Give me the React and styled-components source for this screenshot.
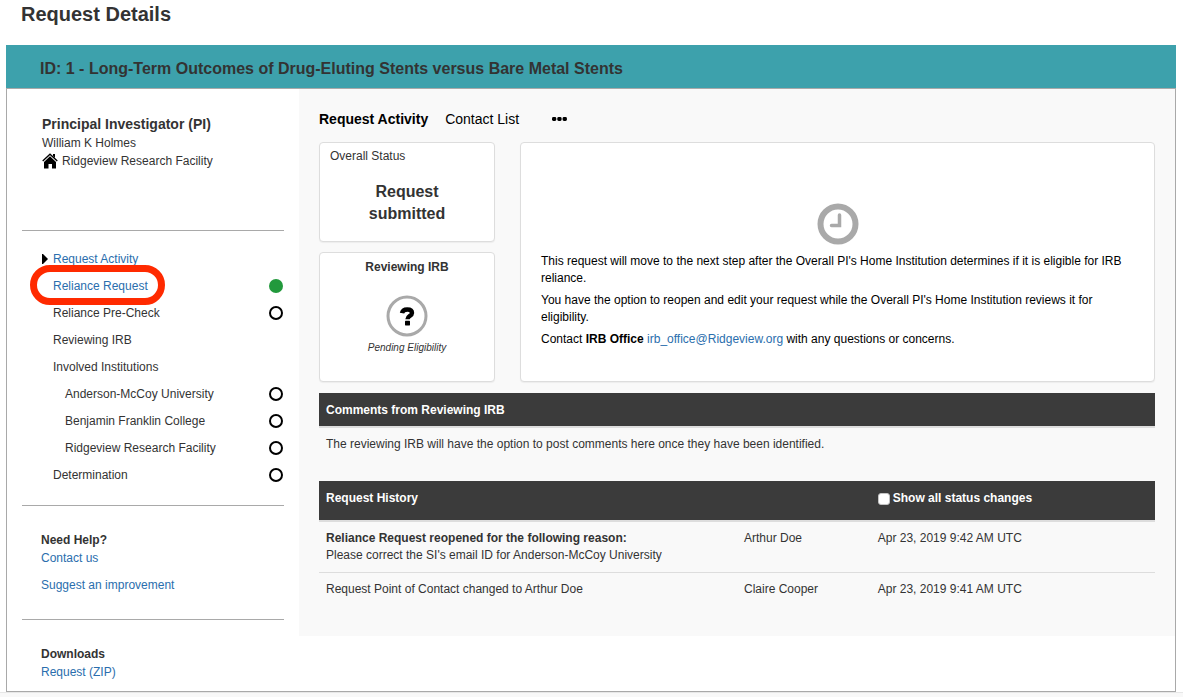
import React from "react";
import styled, { createGlobalStyle } from "styled-components";

const GlobalStyle = createGlobalStyle`
  *, *::before, *::after { box-sizing: border-box; }
  body {
    margin: 0;
    background: #fff;
    color: #333;
    font-family: "Liberation Sans", Arial, Helvetica, sans-serif;
    font-size: 12px;
    line-height: 18px;
  }
  h1, h2, h3, p, ul, table { margin: 0; padding: 0; }
  ul { list-style: none; }
`;

const Page = styled.div`
  padding: 0 7px 0 6px;
`;

const PageTitle = styled.h1`
  padding: 0 15px 17px;
  font-size: 20px;
  line-height: 28px;
`;

const Panel = styled.section`
  display: flex;
  flex-direction: column;
`;

const PanelHeader = styled.h2`
  padding: 12px 34px 8px;
  background: #3da1ac;
  font-size: 16px;
  line-height: 23px;
`;

const PanelBody = styled.div`
  display: flex;
  align-items: flex-start;
  border: 1px solid #a9a9a9;
`;

const Sidebar = styled.aside`
  flex: 0 0 25%;
  padding: 0 15px;
`;

const SideSection = styled.section`
  padding: ${(p) => p.$pad};
  border-top: ${(p) => (p.$first ? "0" : "1px solid #a9a9a9")};
`;

const SideHeading = styled.h3`
  font-size: ${(p) => (p.$large ? "14px" : "12px")};
  line-height: ${(p) => (p.$large ? "19px" : "18px")};
`;

const Link = styled.a`
  color: #2a6ead;
  text-decoration: none;
`;

const SideLink = styled(Link)`
  display: block;
  margin-bottom: ${(p) => (p.$spaced ? "9px" : "0")};
`;

const Facility = styled.p`
  display: flex;
  align-items: center;
  gap: 4px;
`;

const NavItem = styled.li`
  display: flex;
  align-items: center;
  justify-content: space-between;
  height: 27px;
  padding-left: ${(p) => (p.$nested ? "43px" : p.$current ? "20px" : "31px")};
  padding-right: 1px;
`;

const NavLabel = styled.span`
  position: relative;
  display: flex;
  align-items: center;
`;

const Marker = styled.svg`
  width: 6px;
  height: 10px;
  margin-right: 5px;
`;

const Highlight = styled.span`
  position: absolute;
  inset: -12px -17px -10px -23px;
  border: 7px solid #ff2a00;
  border-radius: 20px;
  pointer-events: none;
`;

const StatusDot = styled.span`
  width: 14px;
  height: 14px;
  border-radius: 50%;
  border: ${(p) => (p.$done ? "0" : "2px solid #000")};
  background: ${(p) => (p.$done ? "#22993c" : "transparent")};
`;

const Main = styled.main`
  flex: 1;
  min-width: 0;
  padding: 20px 20px 30px;
  background: #f9f9f9;
`;

const Tabs = styled.nav`
  display: flex;
  align-items: center;
  height: 20px;
  margin-bottom: 13px;
`;

const Tab = styled.button`
  margin: 0 17px 0 0;
  padding: 0;
  border: 0;
  background: none;
  color: #000;
  font-family: inherit;
  font-size: 14px;
  font-weight: ${(p) => (p.$active ? "bold" : "normal")};
  line-height: 20px;
`;

const MoreButton = styled(Tab)`
  display: flex;
  margin: 0 0 0 16px;
`;

const Summary = styled.div`
  display: flex;
  gap: 25px;
  margin-bottom: 11px;
`;

const StatusColumn = styled.div`
  display: flex;
  flex-direction: column;
  flex: 0 0 176px;
  gap: 10px;
`;

const Card = styled.section`
  border: 1px solid #ddd;
  border-radius: 4px;
  background: #fff;
  box-shadow: 0 1px 1px rgba(0, 0, 0, 0.05);
`;

const StatusCard = styled(Card)`
  padding: 4px 10px 16px;
`;

const StatusValue = styled.p`
  padding: 16px 30px 0;
  font-size: 16px;
  font-weight: bold;
  line-height: 22px;
  text-align: center;
`;

const ReviewCard = styled(Card)`
  display: flex;
  flex-direction: column;
  align-items: center;
  padding: 5px 10px 24px;
`;

const ReviewIcon = styled.svg`
  margin: 19px 0 2px;
`;

const ReviewNote = styled.p`
  font-size: 10px;
  font-style: italic;
`;

const MessageCard = styled(Card)`
  display: flex;
  flex: 1;
  flex-direction: column;
  min-width: 0;
  padding: 60px 20px 0;
  color: #000;
  line-height: 17px;
`;

const ClockIcon = styled.svg`
  align-self: center;
  margin-bottom: 8px;
`;

const Message = styled.p`
  margin-bottom: 5px;
`;

const DataTable = styled.table`
  width: 100%;
  border-collapse: separate;
  border-spacing: 0;
  table-layout: fixed;
  line-height: 17px;
  margin-bottom: ${(p) => (p.$spaced ? "20px" : "0")};
`;

const HeadCell = styled.th`
  width: ${(p) => p.$width || "auto"};
  padding: ${(p) => (p.$tall ? "9px 7px 13px" : "9px 7px 7px")};
  border-bottom: 2px solid #ddd;
  background: #3b3b3b;
  background-clip: padding-box;
  color: #fff;
  text-align: left;
  vertical-align: top;
`;

const Cell = styled.td`
  padding: 8px 7px;
  border-top: ${(p) => (p.$ruled ? "1px solid #ddd" : "0")};
  vertical-align: top;
`;

const CheckLabel = styled.label`
  display: flex;
  align-items: center;
  gap: 3px;
`;

const Checkbox = styled.input`
  appearance: none;
  width: 12px;
  height: 12px;
  margin: 0;
  border: 1px solid #c4c4c4;
  border-radius: 3px;
  background: #fff;
  &:checked { background: #337ab7; }
`;

const PageFooter = styled.footer`
  height: 5px;
  border-top: 1px solid #e7e7e7;
  background: #f8f8f8;
`;

const steps = [
  { label: "Request Activity", link: true, current: true },
  { label: "Reliance Request", link: true, highlight: true, status: "done" },
  { label: "Reliance Pre-Check", status: "open" },
  { label: "Reviewing IRB" },
  { label: "Involved Institutions" },
  { label: "Anderson-McCoy University", nested: true, status: "open" },
  { label: "Benjamin Franklin College", nested: true, status: "open" },
  { label: "Ridgeview Research Facility", nested: true, status: "open" },
  { label: "Determination", status: "open" },
];

const history = [
  {
    title: "Reliance Request reopened for the following reason:",
    text: "Please correct the SI's email ID for Anderson-McCoy University",
    who: "Arthur Doe",
    when: "Apr 23, 2019 9:42 AM UTC",
  },
  {
    text: "Request Point of Contact changed to Arthur Doe",
    who: "Claire Cooper",
    when: "Apr 23, 2019 9:41 AM UTC",
  },
];

function HomeIcon() {
  return (
    <svg width="16" height="16" viewBox="0 0 16 16" aria-hidden="true">
      <path d="M11 1h2v4l-2-2z" fill="#000" />
      <path d="M.7 8 8 1.2 15.3 8" fill="none" stroke="#000" strokeWidth="1.3" />
      <path d="M8 3.3 14 9v6.5H10v-4.5H6.5v4.5H2V9z" fill="#000" />
    </svg>
  );
}

function Step({ step }) {
  return (
    <NavItem $nested={step.nested} $current={step.current}>
      <NavLabel>
        {step.current && (
          <Marker viewBox="0 0 6 10" aria-hidden="true">
            <path d="M0 0h1l5 5-5 5H0z" fill="#000" />
          </Marker>
        )}
        {step.link ? <Link href="#step">{step.label}</Link> : step.label}
        {step.highlight && <Highlight />}
      </NavLabel>
      {step.status && <StatusDot $done={step.status === "done"} />}
    </NavItem>
  );
}

export default function App() {
  return (
    <>
      <GlobalStyle />
      <Page>
        <PageTitle>Request Details</PageTitle>
        <Panel>
          <PanelHeader>
            ID: 1 - Long-Term Outcomes of Drug-Eluting Stents versus Bare Metal Stents
          </PanelHeader>
          <PanelBody>
            <Sidebar>
              <SideSection $first $pad="26px 20px 60px">
                <SideHeading $large>Principal Investigator (PI)</SideHeading>
                <p>William K Holmes</p>
                <Facility>
                  <HomeIcon />
                  Ridgeview Research Facility
                </Facility>
              </SideSection>
              <SideSection $pad="14px 0 17px">
                <ul>
                  {steps.map((step) => (
                    <Step key={step.label} step={step} />
                  ))}
                </ul>
              </SideSection>
              <SideSection $pad="25px 19px">
                <SideHeading>Need Help?</SideHeading>
                <SideLink href="#contact" $spaced>Contact us</SideLink>
                <SideLink href="#suggest">Suggest an improvement</SideLink>
              </SideSection>
              <SideSection $pad="25px 19px 10px">
                <SideHeading>Downloads</SideHeading>
                <SideLink href="#zip">Request (ZIP)</SideLink>
              </SideSection>
            </Sidebar>
            <Main>
              <Tabs>
                <Tab type="button" $active>Request Activity</Tab>
                <Tab type="button">Contact List</Tab>
                <MoreButton type="button" aria-label="More">
                  <svg width="15" height="4" viewBox="0 0 15 4" aria-hidden="true">
                    <rect x="0" y="0" width="4.3" height="4" rx="1.4" />
                    <rect x="5.3" y="0" width="4.3" height="4" rx="1.4" />
                    <rect x="10.6" y="0" width="4.3" height="4" rx="1.4" />
                  </svg>
                </MoreButton>
              </Tabs>
              <Summary>
                <StatusColumn>
                  <StatusCard>
                    <p>Overall Status</p>
                    <StatusValue>Request submitted</StatusValue>
                  </StatusCard>
                  <ReviewCard>
                    <SideHeading>Reviewing IRB</SideHeading>
                    <ReviewIcon width="42" height="42" viewBox="0 0 42 42" aria-hidden="true">
                      <circle cx="21" cy="21" r="19" fill="none" stroke="#a9a9a9" strokeWidth="3" />
                      <path
                        d="M16 18.2c.4-2.6 2.200-3.700 5.200-3.700 3 0 4.800 1.300 4.800 3.400 0 3.100-4.500 2.800-4.500 6.300"
                        fill="none"
                        stroke="#000"
                        strokeWidth="4.4"
                      />
                      <rect x="19" y="25.800" width="5" height="4.600" rx=".6" fill="#000" />
                    </ReviewIcon>
                    <ReviewNote>Pending Eligibility</ReviewNote>
                  </ReviewCard>
                </StatusColumn>
                <MessageCard>
                  <ClockIcon width="42" height="42" viewBox="0 0 42 42" aria-hidden="true">
                    <circle cx="21" cy="21" r="17.5" fill="none" stroke="#a9a9a9" strokeWidth="6" />
                    <path
                      d="M22.5 12v10.500h-8"
                      fill="none"
                      stroke="#a9a9a9"
                      strokeWidth="3.5"
                      strokeLinecap="round"
                    />
                  </ClockIcon>
                  <Message>
                    This request will move to the next step after the Overall PI's Home Institution
                    determines if it is eligible for IRB reliance.
                  </Message>
                  <Message>
                    You have the option to reopen and edit your request while the Overall PI's Home
                    Institution reviews it for eligibility.
                  </Message>
                  <Message>
                    Contact <b>IRB Office</b>{" "}
                    <Link href="mailto:irb_office@Ridgeview.org">irb_office@Ridgeview.org</Link> with
                    any questions or concerns.
                  </Message>
                </MessageCard>
              </Summary>
              <DataTable $spaced>
                <thead>
                  <tr>
                    <HeadCell>Comments from Reviewing IRB</HeadCell>
                  </tr>
                </thead>
                <tbody>
                  <tr>
                    <Cell>
                      The reviewing IRB will have the option to post comments here once they have been
                      identified.
                    </Cell>
                  </tr>
                </tbody>
              </DataTable>
              <DataTable>
                <thead>
                  <tr>
                    <HeadCell $tall $width="50%">Request History</HeadCell>
                    <HeadCell $tall $width="16%" aria-label="Changed by" />
                    <HeadCell $tall>
                      <CheckLabel>
                        <Checkbox type="checkbox" />
                        Show all status changes
                      </CheckLabel>
                    </HeadCell>
                  </tr>
                </thead>
                <tbody>
                  {history.map((row, i) => (
                    <tr key={row.when}>
                      <Cell $ruled={i > 0}>
                        {row.title && (
                          <>
                            <b>{row.title}</b>
                            <br />
                          </>
                        )}
                        {row.text}
                      </Cell>
                      <Cell $ruled={i > 0}>{row.who}</Cell>
                      <Cell $ruled={i > 0}>{row.when}</Cell>
                    </tr>
                  ))}
                </tbody>
              </DataTable>
            </Main>
          </PanelBody>
        </Panel>
      </Page>
      <PageFooter />
    </>
  );
}
